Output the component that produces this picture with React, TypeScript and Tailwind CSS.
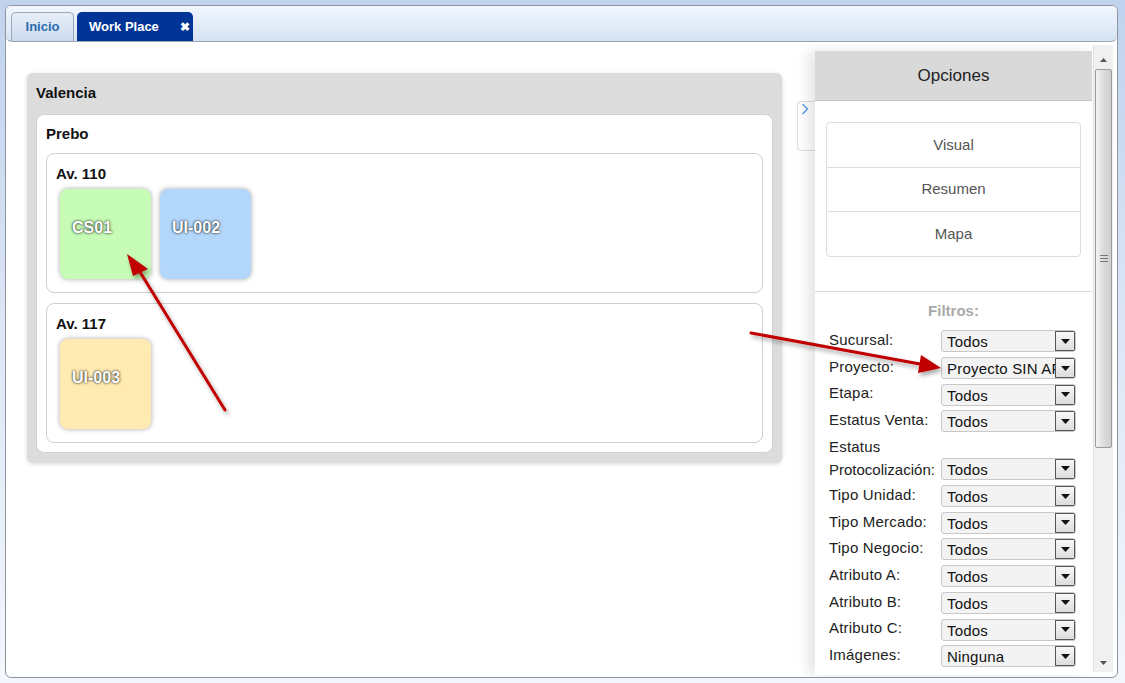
import React from "react";

const tiles110 = [
  { code: "CS01", bg: "bg-[#c6fcb6]" },
  { code: "UI-002", bg: "bg-[#b3d7fb]" },
];

const filtros = [
  { label: "Sucursal:", value: "Todos" },
  { label: "Proyecto:", value: "Proyecto SIN AF" },
  { label: "Etapa:", value: "Todos" },
  { label: "Estatus Venta:", value: "Todos" },
  { label: "Estatus Protocolización:", value: "Todos", two: true },
  { label: "Tipo Unidad:", value: "Todos" },
  { label: "Tipo Mercado:", value: "Todos" },
  { label: "Tipo Negocio:", value: "Todos" },
  { label: "Atributo A:", value: "Todos" },
  { label: "Atributo B:", value: "Todos" },
  { label: "Atributo C:", value: "Todos" },
  { label: "Imágenes:", value: "Ninguna" },
];

const Tile = ({ code, bg }: { code: string; bg: string }) => (
  <div
    className={`${bg} w-[91px] h-[90px] rounded-[8px] shadow-[0_0_5px_rgba(0,0,0,0.35)] pl-[12px] pt-[28px] text-[16px] leading-[22px] font-bold text-white [text-shadow:0_0_3px_rgba(0,0,0,0.85),0_0_1px_rgba(0,0,0,0.6)]`}
  >
    {code}
  </div>
);

const Select = ({ value }: { value: string }) => (
  <div className="relative w-[135px] h-[22px] bg-[#f3f3f3] border border-[#c8c8c8] rounded-[3px] overflow-hidden">
    <span className="absolute left-[5px] top-[1px] text-[15px] leading-[19px] text-[#111] whitespace-nowrap">{value}</span>
    {/* arrow button */}
    <div className="absolute right-[0px] top-[0px] w-[20px] h-[20px] bg-gradient-to-b from-[#f8f8f8] to-[#dcdcdc] border border-[#555] flex items-center justify-center">
      <svg width="9" height="5" viewBox="0 0 9 5">
        <path d="M0 0h9L4.5 5z" fill="#111" />
      </svg>
    </div>
  </div>
);

export default function App() {
  return (
    <div className="relative w-[1125px] h-[683px] bg-gradient-to-b from-[#c0d2ee] via-[#dde7f6] to-[#f4f7fc] p-[5px] font-['Liberation_Sans',Arial,sans-serif]">
      <div className="flex flex-col w-[1113px] h-[673px] border border-[#8f959c] rounded-[6px] bg-white overflow-hidden">
        {/* TABS */}
        <div className="flex items-end gap-[3px] h-[36px] pl-[5px] bg-gradient-to-b from-[#f1f6fd] to-[#d6e3f5] border-b border-[#9aa4b0] rounded-b-[6px] shrink-0">
          <div className="h-[29px] w-[63px] flex items-center justify-center rounded-t-[5px] border border-b-0 border-[#9aa8b8] bg-gradient-to-b from-[#e7eef8] to-[#ccdaee] text-[13px] font-bold text-[#2b6cab]">
            Inicio
          </div>
          <div className="h-[29px] w-[116px] flex items-center pl-[12px] gap-[21px] rounded-t-[5px] bg-[#003597] text-[13px] font-bold text-white whitespace-nowrap">
            Work Place
            <span className="text-[12px]">✖</span>
          </div>
        </div>

        {/* CONTENT */}
        <div className="flex flex-1 min-h-0">
          {/* left work area */}
          <div className="flex-1 pl-[21px] pt-[31px]">
            <div className="w-[755px] bg-[#dcdcdc] rounded-[6px] px-[9px] pb-[10px] shadow-[0_1px_4px_rgba(0,0,0,0.15)]">
              <div className="pt-[10px] pb-[11px] text-[15px] leading-[20px] font-bold text-[#111]">Valencia</div>
              <div className="bg-white border border-[#d2d2d2] rounded-[8px] px-[9px] pb-[9px]">
                <div className="pt-[9px] pb-[9px] text-[15px] leading-[20px] font-bold text-[#111]">Prebo</div>
                <div className="flex flex-col gap-[10px]">
                  <div className="h-[140px] border border-[#cfcfcf] rounded-[8px] px-[13px]">
                    <div className="pt-[10px] pb-[5px] text-[15px] leading-[20px] font-bold text-[#111] -ml-[4px]">Av. 110</div>
                    <div className="flex gap-[9px]">
                      {tiles110.map((t) => (
                        <Tile key={t.code} code={t.code} bg={t.bg} />
                      ))}
                    </div>
                  </div>
                  <div className="h-[140px] border border-[#cfcfcf] rounded-[8px] px-[13px]">
                    <div className="pt-[10px] pb-[5px] text-[15px] leading-[20px] font-bold text-[#111] -ml-[4px]">Av. 117</div>
                    <Tile code="UI-003" bg="bg-[#ffebb2]" />
                  </div>
                </div>
              </div>
            </div>
          </div>

          {/* toggle tab */}
          <div className="w-[18px] pt-[59px] shrink-0">
            <div className="h-[50px] bg-white border border-r-0 border-[#dddddd] rounded-l-[4px] pl-[3px] pt-[1px]">
              <svg width="8" height="12" viewBox="0 0 8 12">
                <path d="M1.5 1l5 5-5 5" stroke="#4d96e8" strokeWidth="1.3" fill="none" />
              </svg>
            </div>
          </div>

          {/* options panel */}
          <div className="w-[277px] mt-[9px] mb-[2px] bg-white shadow-[-7px_0_12px_rgba(0,0,0,0.10)] flex flex-col shrink-0">
            <div className="h-[50px] bg-[#d9d9d9] border-b border-[#c6c6c6] flex items-center justify-center text-[17px] text-[#222]">
              Opciones
            </div>
            <div className="pt-[21px] px-[11px] pb-[34px] border-b border-[#dcdcdc]">
              <div className="border border-[#dddddd] rounded-[4px] text-[15px] text-[#555]">
                <div className="h-[45px] flex items-center justify-center border-b border-[#dddddd]">Visual</div>
                <div className="h-[44px] flex items-center justify-center border-b border-[#dddddd]">Resumen</div>
                <div className="h-[44px] flex items-center justify-center">Mapa</div>
              </div>
            </div>
            <div className="pt-[9px] text-center text-[15px] leading-[20px] font-bold text-[#aaaaaa]">Filtros:</div>
            <div className="pl-[14px] pt-[7px] flex flex-col text-[15px] tracking-[0.2px] text-[#222]">
              {filtros.map((f) =>
                f.two ? (
                  <div key={f.label} className="flex items-end h-[48px] pb-[2px]">
                    <div className="w-[112px] leading-[23px]">
                      Estatus
                      <br />
                      <span className="tracking-[0px]">Protocolización:</span>
                    </div>
                    <div className="mb-[1px]">
                      <Select value={f.value} />
                    </div>
                  </div>
                ) : (
                  <div key={f.label} className="flex items-center h-[26.7px]">
                    <div className="w-[112px] -mt-[2px] whitespace-nowrap">{f.label}</div>
                    <Select value={f.value} />
                  </div>
                )
              )}
            </div>
          </div>

          {/* scrollbar */}
          <div className="w-[20px] mt-[3px] mb-[5px] ml-[1px] mr-[4px] bg-[#f0f0f0] border-l border-[#e2e2e2] flex flex-col items-center shrink-0">
            <div className="h-[24px] flex items-center justify-center pt-[6px]">
              <svg width="7" height="4" viewBox="0 0 7 4">
                <path d="M0 4h7L3.5 0z" fill="#555" />
              </svg>
            </div>
            <div className="w-[17px] h-[379px] border border-[#9c9c9c] rounded-[2px] bg-gradient-to-r from-[#f4f4f4] via-[#dcdcdc] to-[#cfcfcf] flex flex-col items-center justify-center gap-[2px]">
              <div className="w-[8px] h-px bg-[#777]" />
              <div className="w-[8px] h-px bg-[#777]" />
              <div className="w-[8px] h-px bg-[#777]" />
            </div>
            <div className="flex-1" />
            <div className="h-[18px] flex items-center justify-center">
              <svg width="7" height="4" viewBox="0 0 7 4">
                <path d="M0 0h7L3.5 4z" fill="#555" />
              </svg>
            </div>
          </div>
        </div>
      </div>

      {/* annotation arrows */}
      <svg className="absolute left-0 top-0 pointer-events-none" width="1125" height="683">
        <defs>
          <filter id="sh" x="-20%" y="-20%" width="140%" height="140%">
            <feDropShadow dx="2" dy="3" stdDeviation="2" floodColor="#000" floodOpacity="0.35" />
          </filter>
        </defs>
        <g filter="url(#sh)">
          <line x1="225" y1="410" x2="140" y2="272" stroke="#c00000" strokeWidth="3" strokeLinecap="round" />
          <path d="M127 254 L148 269 L133 276 Z" fill="#c00000" />
          <line x1="751" y1="333" x2="920" y2="364" stroke="#c00000" strokeWidth="3" strokeLinecap="round" />
          <path d="M941 368 L918 373 L921 355 Z" fill="#c00000" />
        </g>
      </svg>
    </div>
  );
}
